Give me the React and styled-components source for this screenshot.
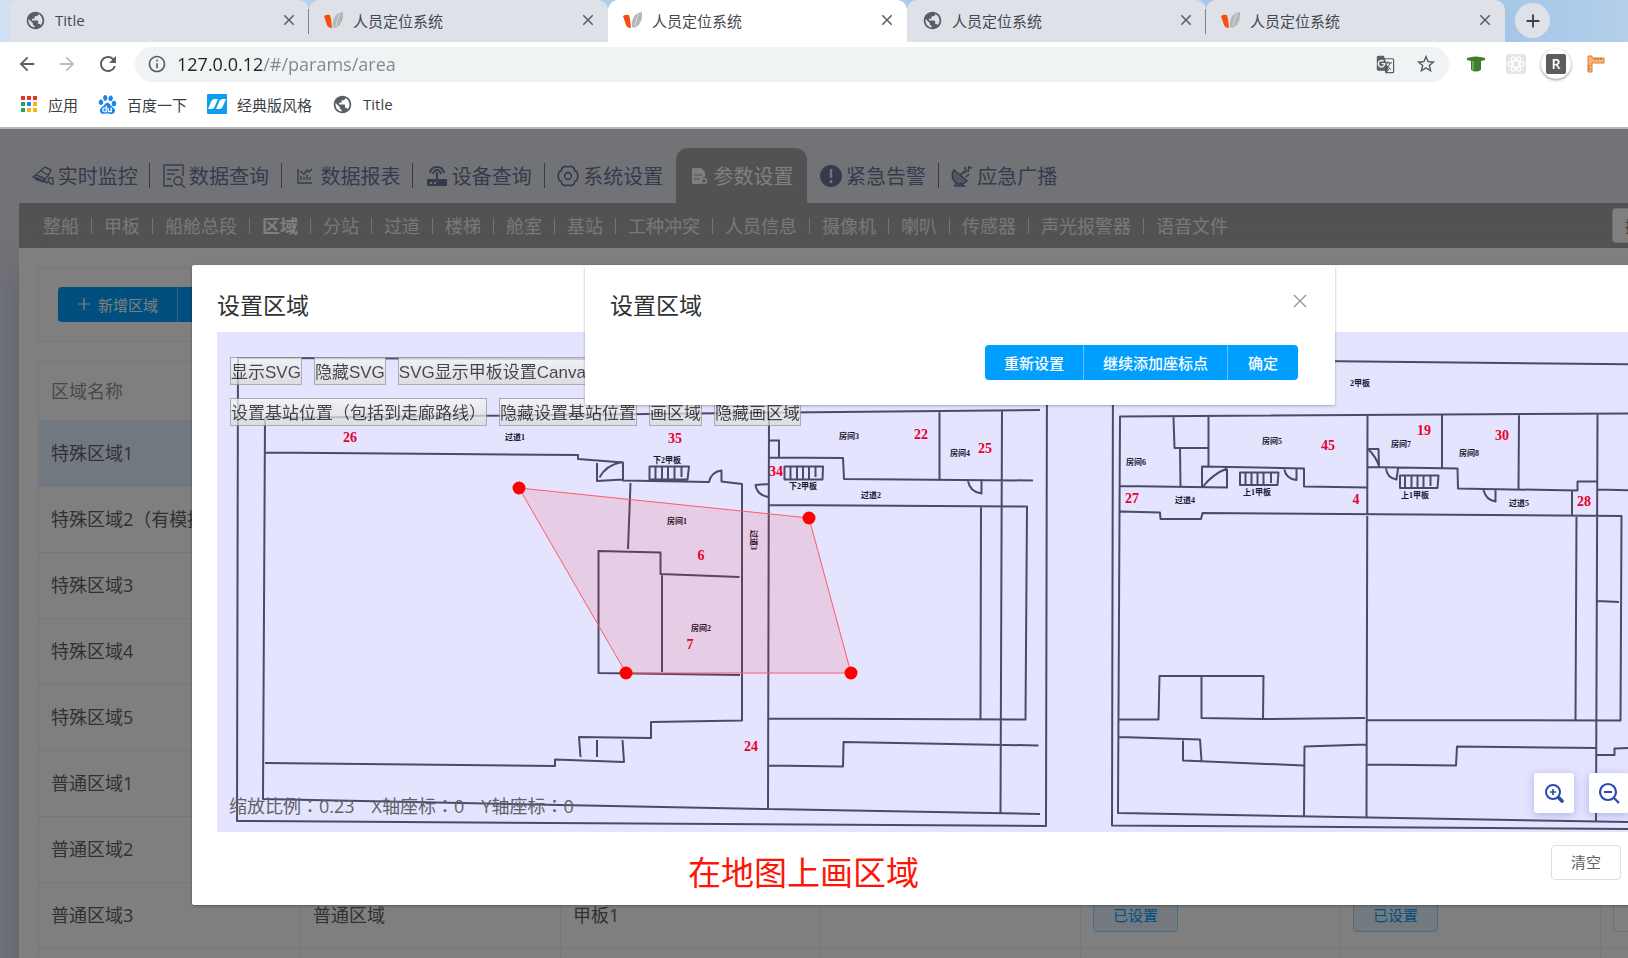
import React from "react";
import styled, { createGlobalStyle } from "styled-components";
import {
    MdPublic,
    MdClose,
    MdAdd,
    MdArrowBack,
    MdArrowForward,
    MdRefresh,
    MdInfoOutline,
    MdGTranslate,
    MdStarBorder,
} from "react-icons/md";
import { SiBaidu } from "react-icons/si";


const GlobalStyle = createGlobalStyle`
    * {
        box-sizing: border-box;
    }
    body {
        margin: 0;
        font-family: "Open Sans", "Noto Sans CJK SC", sans-serif;
        font-weight: 400;
        color: #303133;
    }
    button, input {
        font-family: inherit;
        font-weight: inherit;
        margin: 0;
    }
    a {
        color: inherit;
        text-decoration: none;
    }
`


const Screen = styled.div`
    height: 100vh;
    display: flex;
    flex-direction: column;
    overflow: hidden;
`

/* browser frame */

const TabStrip = styled.div`
    display: flex;
    height: 42px;
    flex-shrink: 0;
    padding-left: 10px;
    background: linear-gradient(90deg, #d0e1f3 0, #b3d0ee 300px, #a6c6e6 1500px, #b3cfeb 100%);
`

const BrowserTab = styled.div`
    flex: 0 0 299px;
    display: flex;
    align-items: center;
    gap: 9px;
    height: 42px;
    padding: 0 11px 2px 15px;
    border-radius: 10px 10px 0 0;
    background: ${({ $active }) => ($active ? "#fff" : "#dee1e8")};
    font-size: 15px;
    color: #45494e;
    position: relative;
    &::after {
        content: "";
        display: ${({ $divider }) => ($divider ? "block" : "none")};
        position: absolute;
        right: 0;
        top: 9px;
        width: 1px;
        height: 25px;
        background: #808388;
    }
    span {
        flex: 1;
    }
    svg {
        flex-shrink: 0;
    }
`

const PlainButton = styled.button`
    display: flex;
    align-items: center;
    justify-content: center;
    padding: 0;
    border: 0;
    background: none;
    color: ${({ $muted }) => ($muted ? "#babcbe" : "#5a5e63")};
    cursor: pointer;
`

const NewTab = styled(PlainButton)`
    width: 35px;
    height: 35px;
    margin: 3px 0 0 10px;
    border-radius: 50%;
    background: #dee1e8;
    color: #3c4043;
`

const Toolbar = styled.div`
    display: flex;
    align-items: center;
    height: 46px;
    flex-shrink: 0;
    padding: 0 0 2px 16px;
    background: #fff;
`

const NavButtons = styled.div`
    display: flex;
    gap: 18px;
    width: 119px;
`

const AddressBar = styled.label`
    flex: 1;
    display: flex;
    align-items: center;
    height: 35px;
    padding: 0 12px;
    border-radius: 18px;
    background: #f0f3f4;
    color: #5a5e63;
    gap: 10px;
`

const AddressTools = styled.div`
    display: flex;
    gap: 20px;
`

const AddressInput = styled.input`
    flex: 1;
    min-width: 0;
    border: 0;
    padding: 0;
    outline: 0;
    font-size: 18px;
    background: linear-gradient(90deg, #202124 86px, #80868b 86px);
    background-clip: text;
    -webkit-background-clip: text;
    -webkit-text-fill-color: transparent;
`

const Extensions = styled.div`
    display: flex;
    align-items: center;
    gap: 10px;
    width: 179px;
    padding-left: 12px;
`

const Extension = styled(PlainButton)`
    width: 30px;
    height: 30px;
    flex-shrink: 0;
    border-radius: 50%;
    box-shadow: ${({ $raised }) => ($raised ? "0 1px 3px rgba(0, 0, 0, 0.45)" : "none")};
`

const Bookmarks = styled.nav`
    display: flex;
    align-items: center;
    gap: 20px;
    height: 41px;
    flex-shrink: 0;
    padding: 0 20px 7px;
    border-bottom: 2px solid #b8b8b8;
    background: #fff;
    font-size: 15px;
    color: #3c4043;
    a {
        display: flex;
        align-items: center;
        gap: 10px;
    }
`

/* application page, laid out for a full size monitor */

const Viewport = styled.div`
    flex: 1;
    position: relative;
    overflow: hidden;
`

const Page = styled.div`
    min-width: 1920px;
    height: 100%;
    padding: 19px 19px 0;
    background: #e4e6ee;
`

const MainNav = styled.nav`
    display: flex;
    width: 1051px;
    height: 55px;
`

const MainLink = styled.a`
    flex: 1;
    display: flex;
    align-items: center;
    justify-content: center;
    gap: 4px;
    position: relative;
    font-size: 20px;
    white-space: nowrap;
    color: ${({ $active }) => ($active ? "#fff" : "#6f7599")};
    background: ${({ $active }) => ($active ? "#a4a4a4" : "none")};
    border-radius: 12px 12px 0 0;
    svg {
        flex-shrink: 0;
    }
    &::after {
        content: "";
        display: ${({ $divider }) => ($divider ? "block" : "none")};
        position: absolute;
        right: 0;
        top: 15px;
        width: 1px;
        height: 25px;
        background: #6f7599;
    }
`

const SubNav = styled.nav`
    display: flex;
    align-items: center;
    height: 45px;
    padding: 0 19px 0 12px;
    background: linear-gradient(#a4a4a4, #a6a7aa);
    color: #f0f0f0;
    font-size: 18px;
`

const SubLink = styled.a`
    padding: 0 12px;
    line-height: 16px;
    border-right: 1px solid #e4e4e4;
    font-weight: ${({ $active }) => ($active ? 700 : "inherit")};
    color: ${({ $active }) => ($active ? "#fff" : "inherit")};
    &:last-of-type {
        border-right: 0;
    }
`

const SearchInput = styled.input`
    width: 270px;
    height: 35px;
    margin-left: auto;
    padding: 0 12px;
    border: 1px solid #dcdfe6;
    border-radius: 4px;
    font-size: 15px;
`

const Content = styled.main`
    display: flex;
    flex-direction: column;
    gap: 19px;
    height: 100%;
    padding: 19px;
    background: #fff;
    box-shadow: 0 20px 30px rgba(110, 120, 190, 0.35);
`

const Card = styled.section`
    border: 1px solid #ebeef5;
    padding: 19px;
`

const ButtonGroup = styled.div`
    display: flex;
    border-radius: 4px;
    overflow: hidden;
    width: fit-content;
`

const ActionButton = styled.button`
    height: 35px;
    padding: 0 19px 1px;
    display: flex;
    align-items: center;
    gap: 7px;
    border: 0;
    border-right: 1px solid #66c5ff;
    background: #009fff;
    color: #fff;
    font-size: 15px;
    font-weight: ${({ $strong }) => ($strong ? 500 : 400)};
    cursor: pointer;
    &:last-child {
        padding: 0 20px 1px;
        border-right: 0;
    }
`

const AreaTable = styled.table`
    width: 100%;
    table-layout: fixed;
    border-collapse: collapse;
    font-size: 18px;
    color: #606266;
    th, td {
        height: 66px;
        padding: 0 12px 3px;
        border: 1px solid #ebeef5;
        text-align: left;
        white-space: nowrap;
        font-weight: inherit;
    }
    th {
        width: 260px;
        height: 59px;
        color: #909399;
        border-left: 0;
        border-right: 0;
    }
    th:first-child {
        width: 262px;
        border-left: 1px solid #ebeef5;
    }
    th:last-child {
        width: auto;
    }
`

const AreaRow = styled.tr`
    background: ${({ $selected }) => ($selected ? "#e3f1ff" : "none")};
`

const StateButton = styled.button`
    display: block;
    width: 85px;
    height: 35px;
    border: 1px solid ${({ $plain }) => ($plain ? "#dcdfe6" : "#99d9ff")};
    border-radius: 4px;
    background: ${({ $plain }) => ($plain ? "#fff" : "#e6f2ff")};
    color: #009fff;
    font-size: 15px;
`

/* dialogs */

const Mask = styled.div`
    position: absolute;
    inset: 0;
    min-width: 1920px;
    background: ${({ $dim }) => ($dim ? "rgba(0, 0, 0, 0.5)" : "none")};
    padding-top: 136px;
`

const Dialog = styled.section`
    width: ${({ $width }) => $width};
    margin: 0 auto;
    border-radius: 2px;
    background: #fff;
    box-shadow: 0 1px 3px rgba(0, 0, 0, 0.3);
`

const DialogHeader = styled.header`
    display: flex;
    align-items: center;
    justify-content: space-between;
    padding: 24px 25px 11px;
    h2 {
        margin: 0;
        font-size: 23px;
        line-height: 32px;
        font-weight: 400;
        color: #303133;
    }
    button {
        color: #909399;
        padding-bottom: 9px;
    }
`

const DialogActions = styled.footer`
    display: flex;
    justify-content: flex-end;
    padding: 13px 37px 25px;
`

const MapFooter = styled.footer`
    display: flex;
    justify-content: space-between;
    height: 73px;
    padding: 13px 107px 0 496px;
`

const Caption = styled.p`
    margin: 0;
    font-size: 33px;
    line-height: 56px;
    color: #ff1408;
`

const ClearButton = styled.button`
    width: 70px;
    height: 35px;
    padding: 0 0 2px;
    border: 1px solid #dcdfe6;
    border-radius: 4px;
    background: #fff;
    color: #606266;
    font-size: 15px;
`

const MapArea = styled.div`
    position: relative;
    height: 500px;
    margin: 0 25px;
    background: #e4e4ff;
    overflow: hidden;
`

const MapTools = styled.div`
    position: absolute;
    top: 25px;
    left: 13px;
    display: flex;
    flex-direction: column;
    gap: 13px;
`

const ToolRow = styled.div`
    display: flex;
    gap: 12px;
`

const ToolButton = styled.button`
    height: 28px;
    padding: 3px 0 0;
    border: 1px solid #999;
    background: linear-gradient(#f6f6f6, #dadada);
    opacity: 0.75;
    font-family: "Liberation Sans", "Noto Sans CJK SC", sans-serif;
    font-size: 17px;
    line-height: 24px;
    white-space: nowrap;
    color: #111;
`

/* the TC face centres the full-width colon */
const MapStatus = styled.div`
    position: absolute;
    left: 12px;
    bottom: 14px;
    display: flex;
    gap: 17px;
    font-family: "Open Sans", "Noto Sans CJK TC", sans-serif;
    font-size: 18px;
    line-height: 24px;
    color: #606266;
`

const ZoomTools = styled.div`
    position: absolute;
    right: 74px;
    bottom: 19px;
    display: flex;
    gap: 15px;
`

const ZoomButton = styled(PlainButton)`
    width: 40px;
    height: 40px;
    border-radius: 3px;
    background: #fff;
    color: #2a4bab;
    box-shadow: 0 2px 8px rgba(70, 90, 180, 0.35);
`

const Plan = styled.svg`
    display: block;
    width: 100%;
    height: 500px;
    .wall {
        fill: none;
        stroke: #4b4b68;
        stroke-width: 2;
        stroke-linejoin: round;
    }
    .room {
        font: bold 8px "Liberation Serif", "Noto Sans CJK SC", serif;
        fill: #16162c;
        text-anchor: middle;
    }
    .count {
        font: bold 14px "Liberation Serif", serif;
        fill: #e5002b;
        text-anchor: middle;
    }
`


const Leaf = () => (
    <svg width="20" height="20" viewBox="0 0 20 20">
        <path d="M0 6q3-2 6-1l1 4 1 9q-4 0-5-3z" fill="#f4500c" />
        <path d="M9 17C8 10 11 3 19 2q1 11-6 15-2 1-4 0z" fill="#b4b7b6" />
        <path d="M12 16c1-5 2-9 4-12" stroke="#dcdedd" fill="none" />
    </svg>
)

const AppsIcon = () => (
    <svg width="18" height="18" viewBox="0 0 18 18">
        {["#ea3323", "#ea3323", "#ea3323", "#1fa463", "#1a84f0", "#f9b50b", "#1fa463", "#f9b50b", "#f9b50b"].map((c, i) => (
            <rect key={i} x={(i % 3) * 6 + 1} y={Math.floor(i / 3) * 6 + 1} width="4" height="4" fill={c} />
        ))}
    </svg>
)

const BlueIcon = () => (
    <svg width="20" height="20" viewBox="0 0 20 20">
        <rect width="20" height="20" rx="1" fill="#0e9df0" />
        <path d="M1 15 4 8q1-3 4-3h3L8 12q-1 3-4 3zM9 15l3-7q1-3 4-3h3l-3 7q-1 3-4 3z" fill="#fff" />
    </svg>
)

const HatIcon = () => (
    <svg width="18" height="16" viewBox="0 0 18 16">
        <path d="M0 2q9-3 18 0v2l-4 1v9q-5 3-10 0V5L0 4z" fill="#3d7d2c" />
        <path d="M6 5v9" stroke="#6fa653" strokeWidth="2" />
    </svg>
)

const AtomIcon = () => (
    <svg width="20" height="20" viewBox="0 0 20 20">
        <rect width="20" height="20" rx="2" fill="#e6e6e6" />
        <g fill="none" stroke="#fff" strokeWidth="1.3">
            <ellipse cx="10" cy="10" rx="8" ry="3.4" />
            <ellipse cx="10" cy="10" rx="8" ry="3.4" transform="rotate(60 10 10)" />
            <ellipse cx="10" cy="10" rx="8" ry="3.4" transform="rotate(120 10 10)" />
        </g>
    </svg>
)

const RulerIcon = () => (
    <svg width="18" height="18" viewBox="0 0 18 18">
        <path d="M1 1h4v2h12v5H5v9H1z" fill="#f6b476" stroke="#de7f34" />
        <path d="M8 3v2M11 3v2M14 3v2M1 11h2M1 14h2" stroke="#b3571b" />
    </svg>
)

const RBadge = styled.span`
    width: 20px;
    height: 20px;
    border-radius: 2px;
    background: #5c5c5c;
    color: #fff;
    font-size: 14px;
    font-weight: 600;
    line-height: 20px;
    text-align: center;
`

const CameraIcon = () => (
    <svg width="22" height="20" viewBox="0 0 22 20" fill="none" stroke="currentColor" strokeWidth="1.4">
        <path d="M1 11 13 1l6 3-3 6-5 4zM4 9l8 3M9 5l7 4M3 13l8 3 3-3M17 12h4v6h-2l-3-3z" />
        <path d="m11 15 5 2" />
    </svg>
)

const QueryIcon = () => (
    <svg width="22" height="24" viewBox="0 0 22 24" fill="none" stroke="currentColor" strokeWidth="1.4">
        <path d="M10 22H1V1h19v11M4 6h12M4 10h8M4 15h4" />
        <circle cx="15" cy="17" r="4" />
        <path d="m18 20 4 4" />
    </svg>
)

const ReportIcon = () => (
    <svg width="22" height="16" viewBox="0 0 22 16" fill="none" stroke="currentColor" strokeWidth="1.4">
        <path d="M4 1v14h14M7 12V8M10 12V9M13 12V7M16 12V9M6 3l4 3 3-4 2 2 3-3" />
    </svg>
)

const RouterIcon = () => (
    <svg width="22" height="22" viewBox="0 0 22 22">
        <path d="M1 14h20v6q0 1-1 1H2q-1 0-1-1z" fill="currentColor" />
        <path d="M11 14V7M4 8q1-6 7-6t7 6M7 9q1-4 4-4t4 4" fill="none" stroke="currentColor" strokeWidth="2" />
        <path d="M4 18h2M8 18h2" stroke="#e4e6ee" strokeWidth="2" />
    </svg>
)

const GearIcon = () => (
    <svg width="22" height="22" viewBox="0 0 22 22" fill="none" stroke="currentColor" strokeWidth="1.6">
        <path d="M8 1q3 2 6 0l3 2q0 3 3 4v1l1 3-1 3v1q-3 1-3 4l-3 2q-3-2-6 0l-3-2q0-3-3-4v-1l-1-3 1-3V7q3-1 3-4z" strokeLinejoin="round" />
        <circle cx="11" cy="11" r="3.4" />
    </svg>
)

const ParamIcon = () => (
    <svg width="20" height="20" viewBox="0 0 20 20">
        <path d="M2 3q0-1 1-1h8l4 4v5q-4 0-4 5l1 2H3q-1 0-1-1z" fill="currentColor" />
        <path d="M4 9h8M4 13h6" stroke="#a4a4a4" />
        <circle cx="14" cy="15" r="2.5" fill="none" stroke="currentColor" strokeWidth="1.6" />
    </svg>
)

const AlertIcon = () => (
    <svg width="22" height="22" viewBox="0 0 22 22">
        <circle cx="11" cy="11" r="11" fill="currentColor" />
        <path d="M11 4v9M11 15v3" stroke="#e4e6ee" strokeWidth="2.4" />
    </svg>
)

const DishIcon = () => (
    <svg width="22" height="22" viewBox="0 0 22 22" fill="none" stroke="currentColor" strokeWidth="1.6">
        <path d="M3 5q-4 7 1 12t12-1z" fill="currentColor" fillOpacity="0.5" />
        <path d="m5 18-1 3h9l-4-3M9 10l4-3M12 6l2 2M14 2l1 6M18 1l-1 6M17 2l4 1M18 9l-3 3" />
    </svg>
)

const ZoomInIcon = () => (
    <svg width="20" height="20" viewBox="0 0 20 20" fill="none" stroke="currentColor" strokeWidth="2">
        <circle cx="9" cy="9" r="7" />
        <path d="M6 9h6M9 6v6" strokeWidth="1.6" />
        <path d="m15 15 3 3" strokeWidth="3.6" strokeLinecap="round" />
    </svg>
)

const ZoomOutIcon = () => (
    <svg width="22" height="22" viewBox="0 0 22 22" fill="none" stroke="currentColor" strokeWidth="2.2">
        <circle cx="10" cy="10" r="8" />
        <path d="M6 10h8M16 16l5 5" />
    </svg>
)

const CloseIcon = () => (
    <svg width="20" height="14" viewBox="0 0 20 14" fill="none" stroke="currentColor" strokeWidth="1.2">
        <path d="m4 1 12 12M16 1 4 13" />
    </svg>
)

const PlusIcon = () => (
    <svg width="14" height="14" viewBox="0 0 14 14" stroke="currentColor" strokeWidth="1.2">
        <path d="M7 1v12M1 7h12" />
    </svg>
)


const browserTabs = [
    { title: "Title", globe: true, divider: true },
    { title: "人员定位系统" },
    { title: "人员定位系统", active: true },
    { title: "人员定位系统", globe: true, divider: true },
    { title: "人员定位系统" },
]

const mainLinks = [
    { label: "实时监控", icon: <CameraIcon />, divider: true },
    { label: "数据查询", icon: <QueryIcon />, divider: true },
    { label: "数据报表", icon: <ReportIcon />, divider: true },
    { label: "设备查询", icon: <RouterIcon />, divider: true },
    { label: "系统设置", icon: <GearIcon /> },
    { label: "参数设置", icon: <ParamIcon />, active: true },
    { label: "紧急告警", icon: <AlertIcon />, divider: true },
    { label: "应急广播", icon: <DishIcon /> },
]

const subLinks = [
    "整船", "甲板", "船舱总段", "区域", "分站", "过道", "楼梯", "舱室",
    "基站", "工种冲突", "人员信息", "摄像机", "喇叭", "传感器", "声光报警器", "语音文件",
]

const areas = [
    { name: "特殊区域1", selected: true },
    { name: "特殊区域2（有模拟" },
    { name: "特殊区域3" },
    { name: "特殊区域4" },
    { name: "特殊区域5" },
    { name: "普通区域1" },
    { name: "普通区域2" },
    { name: "普通区域3", type: "普通区域", deck: "甲板1", state: "已设置" },
    { name: "" },
]

const walls = [
    // lower deck 2
    "M1047 360 238 358 237 821 1046 826Z",
    "M1040 410 265 418 263 799 560 805 768 809 1040 814",
    "M265 452.5 578 455V459L623 462.5V480.5L709 482Q711 472 721.5 470.5V481.5L742 484V720.5L651 722V738L579 737 580.5 757",
    "M597 463V481L623 479.5M599.5 477.5Q606 465 622 462",
    "M597 740V757M622.5 740 624 762 555 759.5V766L265 763",
    "M649.5 466.5H689L687.5 479.5H649.5ZM655.5 467V479M662 467V479M668 467V479M674.5 467V479M681.5 467V477",
    "M630.5 483 628 549M740 675 598.5 673V551L660.5 552.5V574L739.5 577M662 574V672",
    "M769 413 768 809M768 484 755.5 485Q757 495 768 497",
    "M769.5 440.5H779V457.5M769.5 457.5 843 458 844 479 1033 480.5",
    "M784.5 466.5H823L822.5 479.5H784.5ZM790.5 467V479M797 467V479M803 467V479M809 467V479M815.5 467V477",
    "M939.5 412V480M1002 411 1000.5 813M968 481Q970 492 981.5 493.5V481",
    "M769.5 505 1027 506.5 1025.5 719.5 769 718.5M981 507 980.5 719",
    "M768 765.5 843 766.5 843.5 742 1038.5 745.5",
    // upper deck 1
    "M1703 365 1113 359 1112 825.5 1703 829.5",
    "M1703 413 1120 416.5 1118 813 1628 822 1703 823",
    "M1173.5 417 1174.5 448H1207.5M1208.5 417V466M1180 448 1180.5 486.5",
    "M1120.5 486 1227 487.5V468.5M1202 486.5V466.5L1304 468.5V486.5L1367 487.5M1203.5 486Q1213 474 1227 468.5",
    "M1240 472.5H1278.5L1277.5 485H1240ZM1245.5 473V485M1251.5 473V485M1257.5 473V485M1263.5 473V485M1271 473V483",
    "M1284 468.5Q1286 479 1296.5 480V468.5",
    "M1367.5 415.5 1366.5 816.5M1442 415V467.5M1519 414 1518.5 489.5M1597.5 414 1596 820.5",
    "M1367.5 449H1378.5L1379 467.5M1369 450Q1376 457 1379 466",
    "M1367.5 467 1457.5 468.5 1458 488.5 1577.5 490.5V481.5H1597.5",
    "M1386 468.5Q1387 478 1396.5 479.5L1398 468.5M1483.5 490Q1486 500 1495.5 501.5V490",
    "M1400 475.5H1438.5L1437.5 488H1400ZM1405 476V488M1411.5 476V488M1417.5 476V488M1423.5 476V488M1430.5 476V486",
    "M1572 491V515.5M1597.5 489.5 1703 492",
    "M1120.5 511.5 1160 512.5 1160.5 519H1201L1202.5 513 1621.5 516 1620.5 720.5 1366.5 720M1576.5 516 1575.5 720M1597.5 601 1619 602",
    "M1119 719.5H1158.5L1159.5 676H1263.5L1263 719M1201.5 676.5V718L1263 719 1365 718",
    "M1119 737 1200 739.5 1201.5 761M1183 740.5V760.5L1303.5 765.5M1304 816 1304.5 746.5 1366 744.5",
    "M1366.5 764.5 1456 765.5 1457 746.5 1596 748M1596.5 755H1614.5V748.5L1703 746",
]

const rooms = [
    ["过道1", 515, 437], ["下2甲板", 667, 460], ["房间3", 849, 436], ["房间4", 960, 453],
    ["过道2", 871, 495], ["下2甲板", 803, 486], ["房间1", 677, 521], ["房间2", 701, 628],
    ["2甲板", 1360, 383], ["房间5", 1272, 441], ["房间6", 1136, 462], ["房间7", 1401, 444],
    ["房间8", 1469, 453], ["上1甲板", 1257, 492], ["上1甲板", 1415, 495], ["过道4", 1185, 500],
    ["过道5", 1519, 503],
]

const counts = [
    [26, 350, 438], [35, 675, 439], [22, 921, 435], [25, 985, 449], [34, 776, 472],
    [6, 701, 556], [7, 690, 645], [24, 751, 747], [45, 1328, 446], [19, 1424, 431],
    [30, 1502, 436], [27, 1132, 499], [4, 1356, 500], [28, 1584, 502],
]

const points = [[519, 488], [809, 518], [851, 673], [626, 673]]


const Browser = () => (
    <>
        <TabStrip>
            {browserTabs.map((tab, i) => (
                <BrowserTab key={i} $active={tab.active} $divider={tab.divider}>
                    {tab.globe ? <MdPublic size={21} color="#5a5e63" /> : <Leaf />}
                    <span>{tab.title}</span>
                    <PlainButton aria-label="关闭"><MdClose size={18} /></PlainButton>
                </BrowserTab>
            ))}
            <NewTab aria-label="新标签页"><MdAdd size={22} /></NewTab>
        </TabStrip>
        <Toolbar>
            <NavButtons>
                <PlainButton aria-label="后退"><MdArrowBack size={22} /></PlainButton>
                <PlainButton aria-label="前进" $muted><MdArrowForward size={22} /></PlainButton>
                <PlainButton aria-label="刷新"><MdRefresh size={24} /></PlainButton>
            </NavButtons>
            <AddressBar>
                <MdInfoOutline size={20} />
                <AddressInput aria-label="地址" defaultValue="127.0.0.12/#/params/area" />
                <AddressTools>
                    <PlainButton aria-label="翻译"><MdGTranslate size={19} /></PlainButton>
                    <PlainButton aria-label="收藏"><MdStarBorder size={22} /></PlainButton>
                </AddressTools>
            </AddressBar>
            <Extensions>
                <Extension aria-label="扩展程序"><HatIcon /></Extension>
                <Extension aria-label="扩展程序"><AtomIcon /></Extension>
                <Extension $raised><RBadge>R</RBadge></Extension>
                <Extension aria-label="扩展程序"><RulerIcon /></Extension>
            </Extensions>
        </Toolbar>
        <Bookmarks>
            <a href="#apps"><AppsIcon />应用</a>
            <a href="#baidu"><SiBaidu size={19} color="#1a84f0" />百度一下</a>
            <a href="#classic"><BlueIcon />经典版风格</a>
            <a href="#title"><MdPublic size={21} color="#5a5e63" />Title</a>
        </Bookmarks>
    </>
)


const DeckPlan = () => (
    <Plan viewBox="217 332 1486 500" preserveAspectRatio="xMinYMin slice">
        <path className="wall" d={walls.join("")} />
        {rooms.map(([name, x, y]) => (
            <text key={`${name}-${x}`} className="room" x={x} y={y + 3}>{name}</text>
        ))}
        <text className="room" transform="translate(751 540) rotate(90)">过道3</text>
        {counts.map(([n, x, y]) => (
            <text key={n} className="count" x={x} y={y + 4}>{n}</text>
        ))}
        <polygon points={points.join(" ")} fill="rgba(255, 0, 0, 0.1)" stroke="#ff5a66" />
        {points.map(([x, y]) => (
            <circle key={x} cx={x} cy={y} r="6.5" fill="#f00" />
        ))}
    </Plan>
)


const AreaPage = () => (
    <Page>
        <MainNav>
            {mainLinks.map((link) => (
                <MainLink key={link.label} href="#" $active={link.active} $divider={link.divider}>
                    {link.icon}
                    {link.label}
                </MainLink>
            ))}
        </MainNav>
        <SubNav>
            {subLinks.map((label) => (
                <SubLink key={label} href="#" $active={label === "区域"}>{label}</SubLink>
            ))}
            <SearchInput aria-label="搜索" placeholder="搜索" />
        </SubNav>
        <Content>
            <Card>
                <ButtonGroup>
                    <ActionButton><PlusIcon />新增区域</ActionButton>
                    <ActionButton aria-label="更多" />
                </ButtonGroup>
            </Card>
            <AreaTable>
                <thead>
                    <tr>
                        <th>区域名称</th>
                        <th /><th /><th /><th /><th /><th />
                    </tr>
                </thead>
                <tbody>
                    {areas.map((area, i) => (
                        <AreaRow key={i} $selected={area.selected}>
                            <td>{area.name}</td>
                            <td>{area.type}</td>
                            <td>{area.deck}</td>
                            <td />
                            <td>{area.state && <StateButton>{area.state}</StateButton>}</td>
                            <td>{area.state && <StateButton>{area.state}</StateButton>}</td>
                            <td>{area.state && <StateButton $plain aria-label="编辑" />}</td>
                        </AreaRow>
                    ))}
                </tbody>
            </AreaTable>
        </Content>
    </Page>
)


const MapDialog = () => (
    <Mask $dim>
        <Dialog $width="80%">
            <DialogHeader><h2>设置区域</h2></DialogHeader>
            <MapArea>
                <DeckPlan />
                <MapTools>
                    <ToolRow>
                        <ToolButton>显示SVG</ToolButton>
                        <ToolButton>隐藏SVG</ToolButton>
                        <ToolButton>SVG显示甲板设置Canvas</ToolButton>
                    </ToolRow>
                    <ToolRow>
                        <ToolButton>设置基站位置（包括到走廊路线）</ToolButton>
                        <ToolButton>隐藏设置基站位置</ToolButton>
                        <ToolButton>画区域</ToolButton>
                        <ToolButton>隐藏画区域</ToolButton>
                    </ToolRow>
                </MapTools>
                <MapStatus>
                    <span>缩放比例：0.23</span>
                    <span>X轴座标：0</span>
                    <span>Y轴座标：0</span>
                </MapStatus>
                <ZoomTools>
                    <ZoomButton aria-label="放大"><ZoomInIcon /></ZoomButton>
                    <ZoomButton aria-label="缩小"><ZoomOutIcon /></ZoomButton>
                </ZoomTools>
            </MapArea>
            <MapFooter>
                <Caption>在地图上画区域</Caption>
                <ClearButton>清空</ClearButton>
            </MapFooter>
        </Dialog>
    </Mask>
)


const PointDialog = () => (
    <Mask>
        <Dialog $width="750px">
            <DialogHeader>
                <h2>设置区域</h2>
                <PlainButton aria-label="关闭"><CloseIcon /></PlainButton>
            </DialogHeader>
            <DialogActions>
                <ButtonGroup>
                    <ActionButton $strong>重新设置</ActionButton>
                    <ActionButton $strong>继续添加座标点</ActionButton>
                    <ActionButton $strong>确定</ActionButton>
                </ButtonGroup>
            </DialogActions>
        </Dialog>
    </Mask>
)


const App = () => {
    return (
        <Screen>
            <GlobalStyle />
            <Browser />
            <Viewport>
                <AreaPage />
                <MapDialog />
                <PointDialog />
            </Viewport>
        </Screen>
    );
};


export default App;
